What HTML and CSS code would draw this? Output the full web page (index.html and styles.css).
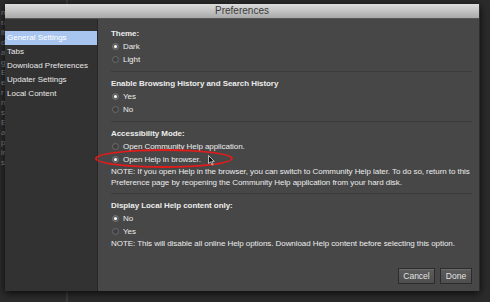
FILE: index.html
```html
<!DOCTYPE html>
<html lang="en">
<head>
    <meta charset="UTF-8">
    <title>Preferences</title>
    <link rel="stylesheet" href="styles.css">
</head>
<body>

<div class="desktop">
    <div class="app-side">
        <div class="frag">m</div>
        <div class="frag">r/</div>
        <div class="frag">lt</div>
        <div class="frag">di</div>
        <div class="frag">a</div>
        <div class="frag">g</div>
        <div class="frag">E</div>
        <div class="frag">e</div>
        <div class="frag">r</div>
        <div class="frag">n</div>
        <div class="frag">s/</div>
        <div class="frag">E</div>
        <div class="frag">a</div>
        <div class="frag">p</div>
        <div class="frag">ir</div>
        <div class="frag">s/</div>
    </div>
    <div class="app-main"></div>
</div>

<div class="dialog">
    <div class="titlebar">Preferences</div>
    <div class="dialog-body">
        <ul class="sidebar">
            <li class="selected">General Settings</li>
            <li>Tabs</li>
            <li>Download Preferences</li>
            <li>Updater Settings</li>
            <li>Local Content</li>
        </ul>

        <div class="content">
            <div class="group">
                <div class="heading">Theme:</div>
                <div class="option"><span class="radio checked"></span>Dark</div>
                <div class="option"><span class="radio"></span>Light</div>
            </div>

            <div class="group">
                <div class="heading">Enable Browsing History and Search History</div>
                <div class="option"><span class="radio checked"></span>Yes</div>
                <div class="option"><span class="radio"></span>No</div>
            </div>

            <div class="group">
                <div class="heading">Accessibility Mode:</div>
                <div class="option"><span class="radio"></span>Open Community Help application.</div>
                <div class="option marked">
                    <span class="radio checked"></span>Open Help in browser.
                    <span class="circle-mark"></span>
                    <svg class="cursor" width="7" height="11" viewBox="0 0 7 11">
                        <path d="M0.5 0.5 L0.5 8.5 L2.5 6.8 L4 10 L5.2 9.4 L3.8 6.3 L6.3 6.3 Z" fill="#111" stroke="#ddd" stroke-width="0.8"/>
                    </svg>
                </div>
                <div class="note">NOTE: If you open Help in the browser, you can switch to Community Help later. To do so, return to this<br>Preference page by reopening the Community Help application from your hard disk.</div>
            </div>

            <div class="group last">
                <div class="heading">Display Local Help content only:</div>
                <div class="option"><span class="radio checked"></span>No</div>
                <div class="option"><span class="radio"></span>Yes</div>
                <div class="note">NOTE: This will disable all online Help options. Download Help content before selecting this option.</div>
            </div>

            <div class="buttons">
                <button type="button" class="btn-cancel">Cancel</button>
                <button type="button" class="btn-done">Done</button>
            </div>
        </div>
    </div>
</div>

</body>
</html>
```

FILE: styles.css
```css
body {
    margin: 0;
    width: 490px;
    height: 302px;
    overflow: hidden;
    background-color: #2a2a2a;
    font-family: 'Liberation Sans', Arial, sans-serif;
    position: relative;
}
.desktop {
    display: flex;
    height: 302px;
}
.app-side {
    width: 66px;
    background-color: #2c2c2c;
    border-right: 2px solid #3c3c3c;
    padding-top: 8px;
}
.frag {
    color: #8a8a8a;
    font-size: 8px;
    line-height: 10px;
    padding-left: 1px;
}
.app-main {
    flex: 1;
    background-color: #2b2b2b;
}
.dialog {
    position: absolute;
    left: 5px;
    top: 4px;
    width: 474px;
    height: 287px;
    display: flex;
    flex-direction: column;
    box-shadow: 0 2px 8px rgba(0, 0, 0, 0.8);
    border-right: 1px solid #2e2e2e;
}
.titlebar {
    height: 14px;
    line-height: 14px;
    text-align: center;
    font-size: 10px;
    color: #3a3a3a;
    background: linear-gradient(#dcdcdc, #a9a9a9);
    border-bottom: 1px solid #555;
}
.dialog-body {
    flex: 1;
    display: flex;
    min-width: 0;
}
.sidebar {
    list-style: none;
    margin: 0;
    padding: 12px 0 0;
    width: 92px;
    flex-shrink: 0;
    background-color: #323232;
    border-right: 1px solid #262626;
}
.sidebar li {
    height: 14px;
    line-height: 14px;
    padding-left: 2px;
    font-size: 8px;
    color: #e8e8e8;
    white-space: nowrap;
}
.sidebar li.selected {
    background-color: #a7c5ee;
    color: #ffffff;
}
.content {
    flex: 1;
    min-width: 0;
    background-color: #474747;
    padding: 9px 7px 0 13px;
    display: flex;
    flex-direction: column;
    color: #ececec;
    font-size: 8px;
    letter-spacing: -0.06px;
}
.group {
    padding: 5px 0;
    border-bottom: 1px solid #3b3b3b;
}
.group:first-child {
    padding-top: 0;
}
.group + .group .heading {
    margin-top: 1px;
}
.group.last {
    border-bottom: none;
}
.heading {
    height: 12px;
    line-height: 12px;
    font-weight: bold;
    white-space: nowrap;
}
.option {
    height: 13px;
    display: flex;
    align-items: center;
    white-space: nowrap;
}
.marked {
    position: relative;
}
.radio {
    width: 7px;
    height: 7px;
    border-radius: 50%;
    margin: 0 4px 0 1px;
    box-sizing: border-box;
    background-color: #404040;
    border: 1px solid #6a6a6a;
    display: flex;
    align-items: center;
    justify-content: center;
}
.radio.checked {
    background-color: #5c5c5c;
    border-color: #737373;
}
.radio.checked::after {
    content: '';
    width: 3px;
    height: 3px;
    border-radius: 50%;
    background-color: #ffffff;
}
.circle-mark {
    position: absolute;
    left: -16px;
    top: -4px;
    width: 138px;
    height: 19px;
    border: 2px solid #e21b1b;
    border-radius: 50%;
    box-sizing: border-box;
}
.cursor {
    position: absolute;
    left: 97px;
    top: 2px;
}
.note {
    line-height: 11px;
    white-space: nowrap;
}
.buttons {
    margin-top: auto;
    margin-bottom: 7px;
    display: flex;
    justify-content: flex-end;
    gap: 5px;
}
button {
    height: 16px;
    padding: 0;
    font-family: 'Liberation Sans', Arial, sans-serif;
    font-size: 8.5px;
    color: #e2e2e2;
    background: linear-gradient(#5c5c5c, #4e4e4e);
    border: 1px solid #2c2c2c;
    box-shadow: inset 0 1px 0 #6a6a6a;
}
.btn-cancel {
    width: 37px;
}
.btn-done {
    width: 32px;
}
```
